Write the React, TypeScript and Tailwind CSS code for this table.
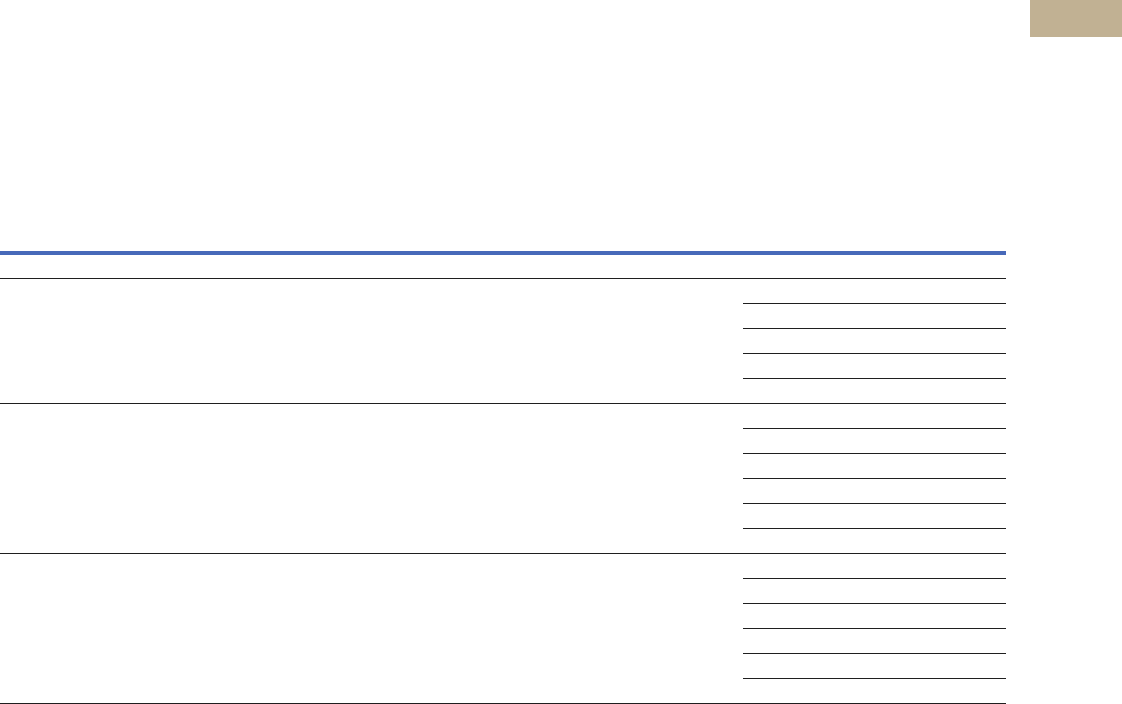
import React from "react";

const groups = [5, 6, 6];

export default function App() {
  return (
    <div className="w-[1122px] h-[704px] bg-white overflow-hidden" style={{ fontFamily: '"Liberation Sans", Arial, sans-serif' }}>
      <div className="flex justify-end">
        <div className="w-[92px] h-[37px] bg-[#c1b193]" />
      </div>
      <div className="h-[214px]" />
      <div className="w-[1006px]">
        <div className="h-[28px] border-t-4 border-b border-t-[#4769b9] border-b-[#1f1f1f]" />
        {groups.map((n, gi) => (
          <div key={gi} className="flex border-b border-[#1f1f1f]">
            <div className="w-[743px]" />
            <div className="flex-1 flex flex-col">
              {Array.from({ length: n }).map((_, i) => (
                <div
                  key={i}
                  className={i < n - 1 ? "h-[25px] border-b border-[#1f1f1f]" : "h-[24px]"}
                />
              ))}
            </div>
          </div>
        ))}
      </div>
    </div>
  );
}
